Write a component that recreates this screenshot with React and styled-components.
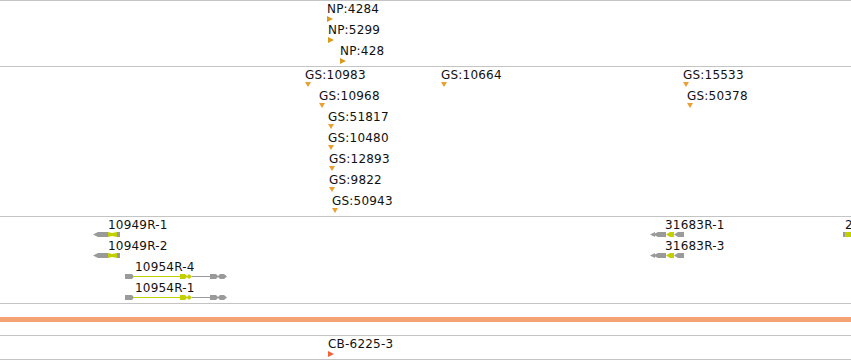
import React from "react";
import styled, { createGlobalStyle } from "styled-components";

const GlobalStyle = createGlobalStyle`
  html, body {
    margin: 0;
    padding: 0;
    background: #ffffff;
  }
  body {
    font-family: "DejaVu Sans", "Liberation Sans", sans-serif;
  }
`;

const Browser = styled.div`
  width: 851px;
  display: flex;
  flex-direction: column;
  overflow: hidden;
`;

const Track = styled.div`
  position: relative;
  height: ${(p) => p.$h}px;
  border-top: 1px solid #c4c4c4;
  border-bottom: ${(p) => (p.$last ? "1px solid #c4c4c4" : "none")};
  display: flex;
  flex-direction: column;
`;

const Row = styled.div`
  position: relative;
  height: 21px;
  flex: none;
`;

const Feature = styled.div`
  position: absolute;
  top: 0;
  left: ${(p) => p.$x}px;
  display: flex;
  flex-direction: column;
  align-items: flex-start;
`;

const Label = styled.span`
  font-size: 12px;
  line-height: 14px;
  height: 13px;
  padding-top: 1px;
  letter-spacing: 0.2px;
  color: #111;
  white-space: nowrap;
  margin-left: ${(p) => p.$dx || 0}px;
`;

const RightMark = styled.span`
  width: 0;
  height: 0;
  margin-top: 1px;
  border-top: 3px solid transparent;
  border-bottom: 3px solid transparent;
  border-left: 6px solid ${(p) => p.$color};
`;

const DownMark = styled.span`
  width: 0;
  height: 0;
  margin-top: 1px;
  border-left: 3px solid transparent;
  border-right: 3px solid transparent;
  border-top: 5px solid ${(p) => p.$color};
`;

const BandTrack = styled(Track)`
  justify-content: center;
`;

const Band = styled.div`
  height: 5px;
  background: #f4a274;
`;

const GREY = "#9a9a9a";
const LIME = "#c2d000";

function GeneShort() {
  return (
    <svg width="28" height="7" viewBox="0 0 28 7">
      <polygon points="0,3.5 5,1 15,1 15,6 5,6" fill={GREY} />
      <polygon points="15,1 19,2 24,1 24,6 19,5 15,6" fill={LIME} />
      <rect x="24" y="1" width="3" height="5" fill={GREY} />
    </svg>
  );
}

function GeneLong() {
  return (
    <svg width="103" height="7" viewBox="0 0 103 7">
      <polygon points="0,1 7,1 9,3.5 7,6 0,6" fill={GREY} />
      <rect x="8" y="3" width="47" height="1" fill={LIME} />
      <polygon points="55,1 60,1 62,3 64,1 67,3.5 64,6 62,4 60,6 55,6" fill={LIME} />
      <rect x="67" y="3" width="19" height="1" fill={GREY} />
      <polygon points="85,1 91,1 93,3 95,1 99,1 102,3.5 99,6 95,6 93,4 91,6 85,6" fill={GREY} />
    </svg>
  );
}

function GeneRev() {
  return (
    <svg width="35" height="7" viewBox="0 0 35 7">
      <polygon points="0,3.5 5,1 5,2.5 8,1 16,1 16,6 8,6 5,4.5 5,6" fill={GREY} />
      <polygon points="16,3.5 20,1 24,1 24,6 20,6" fill={LIME} />
      <polygon points="24,3.5 28,1 34,1 34,6 28,6" fill={GREY} />
    </svg>
  );
}

function GeneEdge() {
  return (
    <svg width="8" height="7" viewBox="0 0 8 7">
      <rect x="0" y="1" width="2" height="5" fill={GREY} />
      <rect x="2" y="1" width="6" height="5" fill={LIME} />
    </svg>
  );
}

const npRows = [
  [{ x: 327, label: "NP:4284" }],
  [{ x: 328, label: "NP:5299" }],
  [{ x: 340, label: "NP:428" }],
];

const gsRows = [
  [
    { x: 305, label: "GS:10983" },
    { x: 441, label: "GS:10664" },
    { x: 683, label: "GS:15533" },
  ],
  [
    { x: 319, label: "GS:10968" },
    { x: 687, label: "GS:50378" },
  ],
  [{ x: 328, label: "GS:51817" }],
  [{ x: 328, label: "GS:10480" }],
  [{ x: 329, label: "GS:12893" }],
  [{ x: 329, label: "GS:9822" }],
  [{ x: 332, label: "GS:50943" }],
];

const geneRows = [
  [
    { x: 93, dx: 15, label: "10949R-1", Glyph: GeneShort },
    { x: 650, dx: 15, label: "31683R-1", Glyph: GeneRev },
    { x: 843, dx: 2, label: "2", Glyph: GeneEdge },
  ],
  [
    { x: 93, dx: 15, label: "10949R-2", Glyph: GeneShort },
    { x: 650, dx: 15, label: "31683R-3", Glyph: GeneRev },
  ],
  [{ x: 125, dx: 10, label: "10954R-4", Glyph: GeneLong }],
  [{ x: 125, dx: 10, label: "10954R-1", Glyph: GeneLong }],
];

export default function App() {
  return (
    <>
      <GlobalStyle />
      <Browser>
        <Track $h={65}>
          {npRows.map((row, i) => (
            <Row key={i}>
              {row.map((f) => (
                <Feature key={f.label} $x={f.x}>
                  <Label>{f.label}</Label>
                  <RightMark $color="#d99a18" />
                </Feature>
              ))}
            </Row>
          ))}
        </Track>

        <Track $h={149}>
          {gsRows.map((row, i) => (
            <Row key={i}>
              {row.map((f) => (
                <Feature key={f.label} $x={f.x}>
                  <Label>{f.label}</Label>
                  <DownMark $color="#eaa030" />
                </Feature>
              ))}
            </Row>
          ))}
        </Track>

        <Track $h={86}>
          {geneRows.map((row, i) => (
            <Row key={i}>
              {row.map((g) => (
                <Feature key={g.label} $x={g.x}>
                  <Label $dx={g.dx}>{g.label}</Label>
                  <g.Glyph />
                </Feature>
              ))}
            </Row>
          ))}
        </Track>

        <BandTrack $h={31}>
          <Band />
        </BandTrack>

        <Track $h={23} $last>
          <Row>
            <Feature $x={328}>
              <Label>CB-6225-3</Label>
              <RightMark $color="#f5623a" />
            </Feature>
          </Row>
        </Track>
      </Browser>
    </>
  );
}
